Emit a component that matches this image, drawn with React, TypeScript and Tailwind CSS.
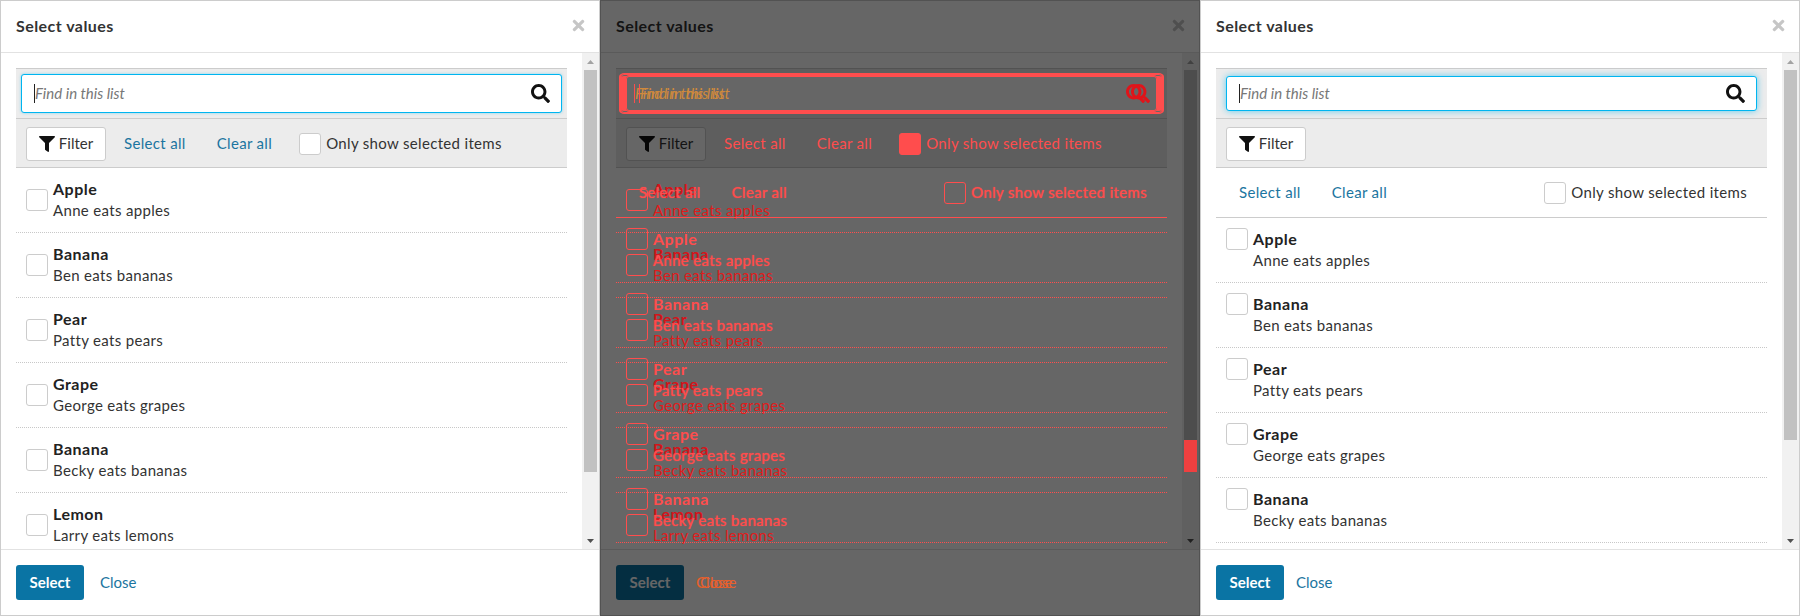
import { FaFilter, FaSearch, FaTimes } from "react-icons/fa";

type Layout = "a" | "b";
type Tone = "plain" | "base" | "diff";

const items = [
  { name: "Apple", note: "Anne eats apples" },
  { name: "Banana", note: "Ben eats bananas" },
  { name: "Pear", note: "Patty eats pears" },
  { name: "Grape", note: "George eats grapes" },
  { name: "Banana", note: "Becky eats bananas" },
  { name: "Lemon", note: "Larry eats lemons" },
];

// plain = normal panel, base = panel minus what moved, diff = only what moved, in red
function pick(tone: Tone, plain: string, base: string, diff: string) {
  return tone === "plain" ? plain : tone === "base" ? base : diff;
}

function Checkbox({ tone, fill }: { tone: Tone; fill?: boolean }) {
  const diff = fill ? "border-[#ff4d4d] bg-[#ff4d4d]" : "border-[#ff4d4d] bg-transparent";
  return (
    <span
      className={
        "block h-[22px] w-[22px] shrink-0 rounded-[3px] border " +
        pick(tone, "border-[#ccc] bg-white", "border-transparent bg-white", diff)
      }
    />
  );
}

function Links({ layout, tone }: { layout: Layout; tone: Tone }) {
  const link = pick(
    tone,
    "text-[#1b75a0]",
    "invisible",
    layout === "a" ? "text-[#ff4d4d]" : "text-[#ff4d4d] [text-shadow:0_0_1px_#ff4d4d]",
  );
  const label = pick(
    tone,
    "text-[#333]",
    "invisible",
    layout === "a" ? "text-[#ff4d4d]" : "text-[#ff4d4d] [text-shadow:0_0_1px_#ff4d4d]",
  );
  const row = (
    <>
      <a className={link}>Select all</a>
      <a className={"ml-[31px] " + link}>Clear all</a>
    </>
  );
  const check = (
    <label className="flex items-center gap-[5px]">
      <Checkbox tone={tone} fill={layout === "a"} />
      <span className={label}>Only show selected items</span>
    </label>
  );
  if (layout === "a") {
    return (
      <>
        <span className="ml-[18px] flex">{row}</span>
        <span className="ml-[27px]">{check}</span>
      </>
    );
  }
  return (
    <div
      className={
        "flex h-[50px] items-center justify-between border-b pl-[23px] pr-[20px] tracking-[0.33px] " +
        pick(tone, "border-[#ccc]", "border-[#ccc]", "border-[#ff4d4d]")
      }
    >
      <span className="flex">{row}</span>
      {check}
    </div>
  );
}

function SearchBar({ layout, tone }: { layout: Layout; tone: Tone }) {
  const size = layout === "a" ? "h-[39px]" : "h-[35px]";
  const look = pick(
    tone,
    layout === "a"
      ? "border-[#00b5f0] bg-white shadow-[0_0_3px_rgba(0,181,240,0.45)]"
      : "border-[#00b5f0] bg-white shadow-[0_0_7px_rgba(0,181,240,0.6)]",
    "border-transparent bg-white",
    layout === "a"
      ? "border-[#ff4d4d] shadow-[0_0_0_1px_#ff4d4d,-2px_0_0_#ff4d4d,2px_0_0_#ff4d4d]"
      : "border-[#ff4d4d] shadow-[-5px_0_0_#ff4d4d,5px_0_0_#ff4d4d,0_-1px_0_#ff4d4d,0_1px_0_#ff4d4d]",
  );
  return (
    <div className={"flex items-center justify-between rounded-[3px] border pl-[12px] pr-[11px] " + size + " " + look}>
      <div className="flex items-center">
        <span className={"h-[19px] w-px " + pick(tone, "bg-[#222]", "invisible", "bg-[#ff4d4d]")} />
        <span className={"italic " + pick(tone, "text-[#777]", "invisible", "text-[#d08a3c]")}>Find in this list</span>
      </div>
      <FaSearch size={19} className={pick(tone, "text-[#111]", "invisible", "text-[#e0141a]")} />
    </div>
  );
}

function Scrollbar({ layout, tone }: { layout: Layout; tone: Tone }) {
  const invisible = tone === "diff" ? "invisible" : "";
  return (
    <div className={"flex w-[17px] shrink-0 flex-col items-center " + (tone === "diff" ? "" : "bg-[#f1f1f1]")}>
      <div className={"flex h-[17px] items-center justify-center " + invisible}>
        <svg width="7" height="4" viewBox="0 0 7 4">
          <polygon points="3.5,0 7,4 0,4" fill="#a3a3a3" />
        </svg>
      </div>
      <div className={"w-[13px] " + (layout === "a" ? "h-[402px] " : "h-[370px] ") + (tone === "diff" ? "bg-transparent" : "bg-[#c1c1c1]")} />
      {tone === "diff" && layout === "b" && <div className="h-[32px] w-[13px] bg-[#ef4040]" />}
      <div className="flex-1" />
      <div className={"flex h-[17px] items-center justify-center " + invisible}>
        <svg width="7" height="4" viewBox="0 0 7 4">
          <polygon points="0,0 7,0 3.5,4" fill="#505050" />
        </svg>
      </div>
    </div>
  );
}

function Panel({ layout, tone = "plain" }: { layout: Layout; tone?: Tone }) {
  const hide = tone === "diff" ? "invisible" : "";
  const rule = tone === "diff" ? "border-transparent" : "border-[#ccc]";
  const soft = tone === "diff" ? "border-transparent" : "border-[#e2e2e2]";
  const nameCls = pick(
    tone,
    "text-[#222]",
    "invisible",
    layout === "a" ? "text-[#d4141a]" : "text-[#ff4d4d]",
  );
  const noteCls = pick(
    tone,
    "text-[#333]",
    "invisible",
    layout === "a" ? "text-[#e01c1c]" : "text-[#ff4d4d] [text-shadow:0_0_1px_#ff4d4d]",
  );

  return (
    <div
      className={
        "flex h-[616px] w-[600px] flex-col border font-['Lato',sans-serif] text-[15px] leading-[21px] " +
        rule +
        (tone === "diff" ? " bg-transparent" : " bg-white")
      }
    >
      <header className={"flex h-[52px] shrink-0 items-center justify-between border-b pb-[2px] pl-[15px] pr-[12px] " + soft}>
        <h4 className={"text-[16px] font-bold tracking-[0.45px] text-[#333] " + hide}>Select values</h4>
        <FaTimes size={17} className={"text-[#c6c6c6] " + hide} />
      </header>

      <div className="flex min-h-0 flex-1">
        <div className="min-w-0 flex-1 overflow-hidden px-[15px] pt-[15px]">
          <div className={"border-y " + rule + (tone === "diff" ? "" : " bg-[#ececec]")}>
            <div className={layout === "a" ? "px-[5px] py-[5px]" : "px-[10px] py-[7px]"}>
              <SearchBar layout={layout} tone={tone} />
            </div>
            <div className={"flex h-[49px] items-center border-t pl-[10px] pt-px tracking-[0.33px] " + rule}>
              <button
                className={
                  "flex h-[34px] w-[80px] items-center justify-center gap-[4px] rounded-[3px] border border-[#ccc] bg-white tracking-normal text-[#333] " +
                  hide
                }
              >
                <FaFilter size={16} className="text-[#111]" />
                Filter
              </button>
              {layout === "a" && <Links layout={layout} tone={tone} />}
            </div>
          </div>
          {layout === "b" && <Links layout={layout} tone={tone} />}
          {items.map((item, i) => (
            <div
              key={i}
              className={
                "flex h-[65px] gap-[5px] border-b border-dotted pl-[10px] pt-[10px] " +
                pick(tone, "border-[#c8c8c8]", "border-transparent", "border-[#ff4d4d]")
              }
            >
              <div className={layout === "a" ? "pt-[11px]" : ""}>
                <Checkbox tone={tone} />
              </div>
              <div>
                <div className={"text-[16px] font-bold tracking-[0.5px] " + nameCls}>{item.name}</div>
                <div className={"mt-px tracking-[0.33px] " + noteCls}>{item.note}</div>
              </div>
            </div>
          ))}
        </div>
        <Scrollbar layout={layout} tone={tone} />
      </div>

      <footer className={"flex h-[66px] shrink-0 items-start border-t pl-[15px] pt-[15px] " + soft}>
        <button className={"h-[35px] w-[68px] rounded-[3px] bg-[#0a74a4] font-bold text-white " + hide}>Select</button>
        <a
          className={
            "flex h-[35px] items-center " +
            (layout === "a" ? "ml-[16px] " : "ml-[12px] ") +
            pick(tone, "text-[#1b75a0]", "invisible", "text-[#e8602c]")
          }
        >
          Close
        </a>
      </footer>
    </div>
  );
}

export default function App() {
  return (
    <div className="flex h-[616px] w-[1800px] overflow-hidden bg-white">
      <Panel layout="a" />
      <div className="relative h-[616px] w-[600px]">
        <Panel layout="a" tone="base" />
        <div className="absolute inset-0 bg-black/60" />
        <div className="absolute inset-0">
          <Panel layout="a" tone="diff" />
        </div>
        <div className="absolute inset-0">
          <Panel layout="b" tone="diff" />
        </div>
      </div>
      <Panel layout="b" />
    </div>
  );
}
